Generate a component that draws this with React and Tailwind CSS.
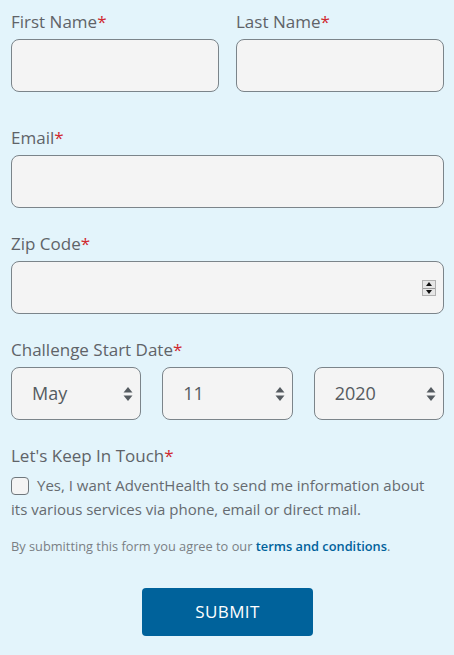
import React from 'react';

const font = { fontFamily: '"Open Sans", "Liberation Sans", sans-serif' };

function Label({ children }) {
  return (
    <div className="text-[17px] leading-[24px] text-[#5f6368] mb-[5px]">
      {children}
      <span className="text-[#d0282e]">*</span>
    </div>
  );
}

function Field({ children }) {
  return (
    <div className="h-[53px] rounded-[8px] border border-[#7b848a] bg-[#f4f4f4] relative">
      {children}
    </div>
  );
}

function Arrows() {
  return (
    <svg width="10" height="16" viewBox="0 0 10 16" className="text-[#555b60]">
      <path d="M5 1 L9.5 6.5 H0.5 Z" fill="currentColor" />
      <path d="M5 15 L9.5 9.5 H0.5 Z" fill="currentColor" />
    </svg>
  );
}

function Select({ value }) {
  return (
    <div className="flex-1 h-[53px] rounded-[8px] border border-[#7b848a] bg-[#f4f4f4] flex items-center justify-between pl-[20px] pr-[7px]">
      <span className="text-[18px] text-[#555b60]">{value}</span>
      <Arrows />
    </div>
  );
}

export default function App() {
  return (
    <div className="w-[454px] h-[655px] bg-[#e3f4fb] pl-[11px] pr-[10px] pt-[10px]" style={font}>
      <div className="flex gap-[17px]">
        <div className="flex-1">
          <Label>First Name</Label>
          <Field />
        </div>
        <div className="flex-1">
          <Label>Last Name</Label>
          <Field />
        </div>
      </div>

      <div className="mt-[34px]">
        <Label>Email</Label>
        <Field />
      </div>

      <div className="mt-[24px]">
        <Label>Zip Code</Label>
        <Field>
          <div className="absolute right-[7px] top-[18px] w-[14px] h-[16px] bg-[#e6e6e6] border border-[#b0b0b0] flex flex-col">
            <div className="flex-1 flex items-center justify-center border-b border-[#9a9a9a]">
              <svg width="6" height="4" viewBox="0 0 6 4"><path d="M3 0 L6 4 H0 Z" fill="#111" /></svg>
            </div>
            <div className="flex-1 flex items-center justify-center">
              <svg width="6" height="4" viewBox="0 0 6 4"><path d="M3 4 L6 0 H0 Z" fill="#111" /></svg>
            </div>
          </div>
        </Field>
      </div>

      <div className="mt-[24px]">
        <Label>Challenge Start Date</Label>
        <div className="flex gap-[21px]">
          <Select value="May" />
          <Select value="11" />
          <Select value="2020" />
        </div>
      </div>

      <div className="mt-[24px]">
        <Label>Let's Keep In Touch</Label>
        <p className="text-[15px] leading-[24px] text-[#666b70] pr-[10px]">
          <span className="inline-block align-[-4px] w-[18px] h-[18px] rounded-[4px] border border-[#6f777c] bg-[#f4f4f4] mr-[8px]" />
          Yes, I want AdventHealth to send me information about its various services via phone, email or direct mail.
        </p>
      </div>

      <p className="mt-[16px] text-[12.8px] leading-[18px] text-[#7a7f84]">
        By submitting this form you agree to our{' '}
        <a className="text-[#00629b] font-semibold">terms and conditions</a>.
      </p>

      <div className="flex justify-center mt-[33px]">
        <button className="w-[171px] h-[48px] rounded-[4px] bg-[#00629b] text-white text-[17px] font-medium tracking-wide">
          SUBMIT
        </button>
      </div>
    </div>
  );
}
